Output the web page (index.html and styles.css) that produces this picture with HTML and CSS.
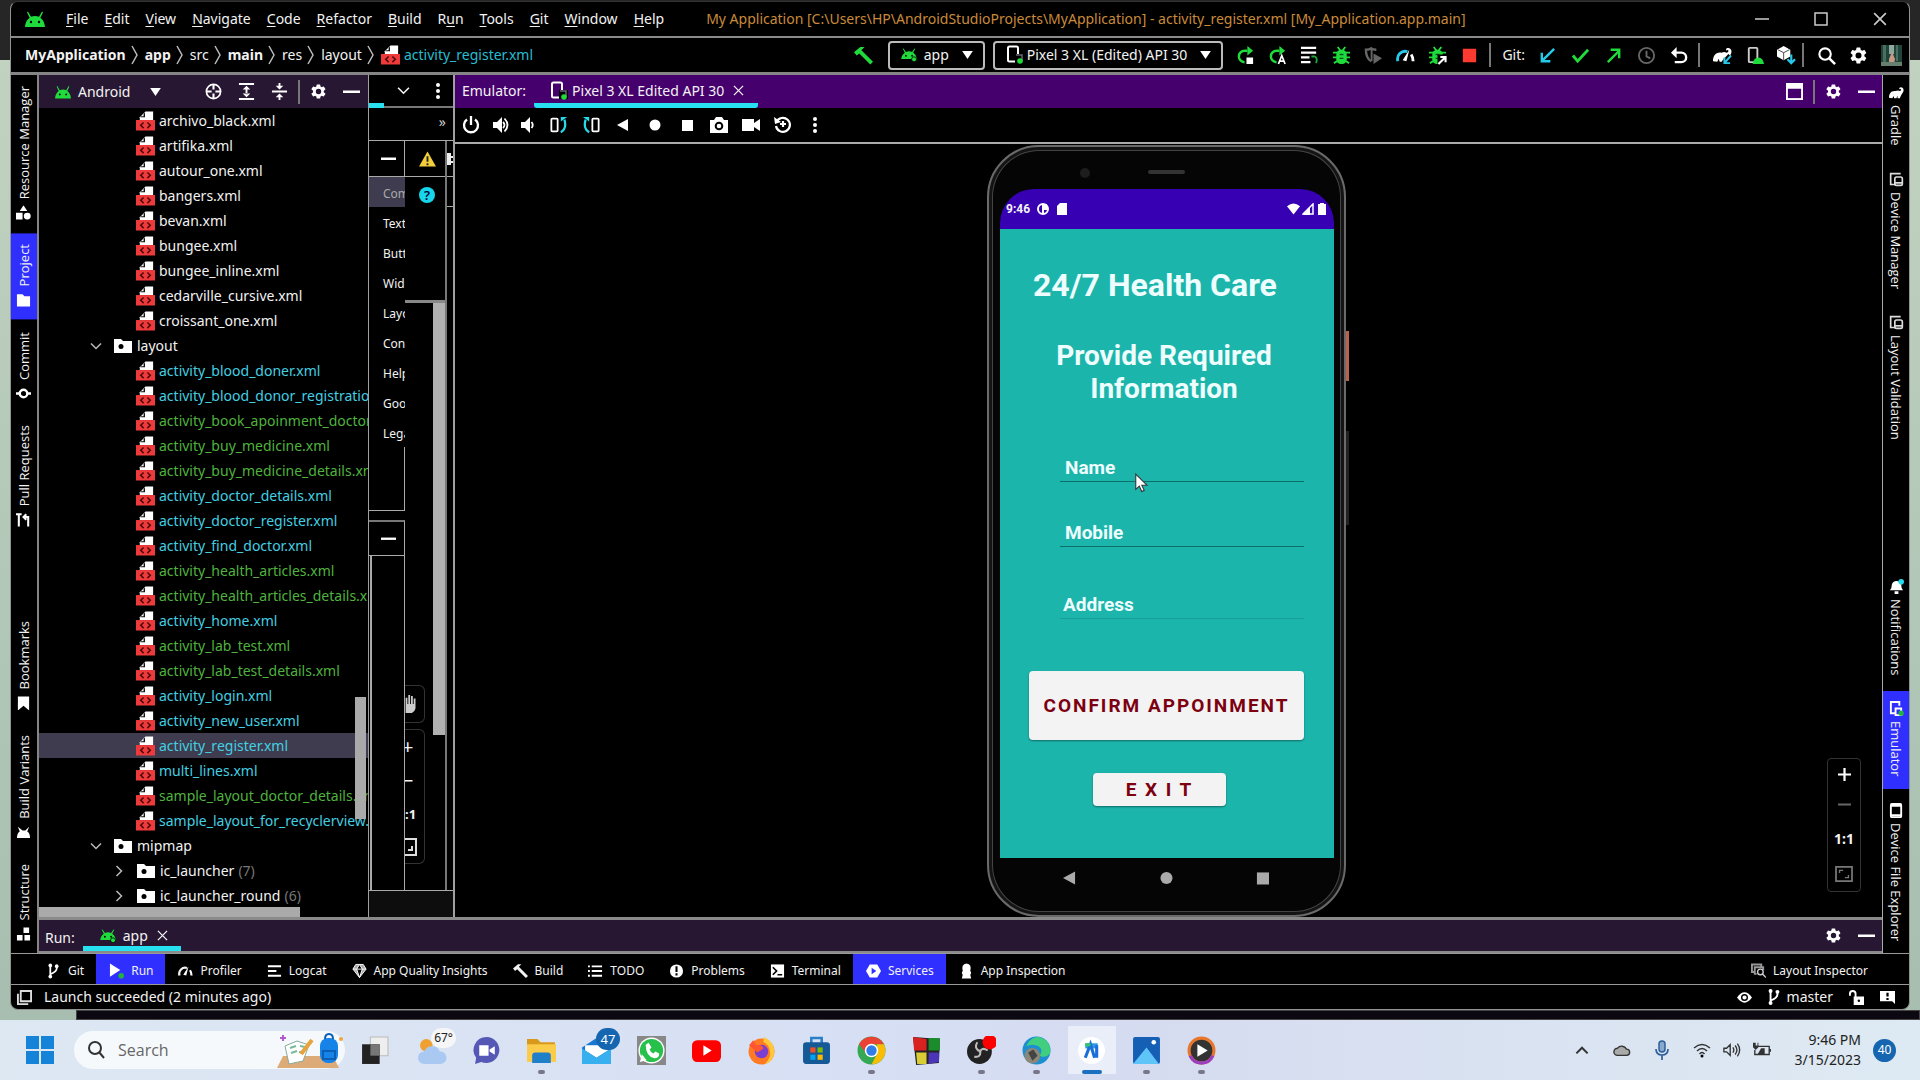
FILE: index.html
```html
<!DOCTYPE html>
<html lang="en">
<head>
<meta charset="utf-8">
<title>My Application - activity_register.xml</title>
<link rel="stylesheet" href="styles.css">
</head>
<body>
<svg class="defs" aria-hidden="true">
  <symbol id="android" viewBox="0 0 20 16"><path fill="#1fdc3c" d="M0 16C.4 11 2.600 8.400 4.600 6.800L2 1.200 3 .6l3 5.200a11 11 0 0 1 8 0L17 .6l1 .6-2.600 5.600C17.400 8.400 19.600 11 20 16z"/><circle cx="6" cy="11" r="1.200"/><circle cx="14" cy="11" r="1.200"/></symbol>
  <symbol id="androidrun" viewBox="0 0 20 18"><path fill="#1fdc3c" d="M0 14C.4 10 2.600 7.400 4.600 6L2 1 3 .5 6 5a11 11 0 0 1 8 0L17 .5l1 .5-2.600 5C17.400 7.400 19.600 10 20 14z"/><circle cx="6" cy="10" r="1.200"/><circle cx="14" cy="10" r="1.200"/><circle cx="16.500" cy="14.500" r="3.200" fill="#1fdc3c" stroke="#000"/></symbol>
  <symbol id="xml" viewBox="0 0 20 20"><path fill="#fff" d="M10 0h8v9H4V6z"/><path fill="#111" d="M9.500 1v5H4.500l1.200-1H8V2.500z"/><path fill="#ee3a3a" d="M0 9h20v11H0z"/><path fill="none" stroke="#4a0a0a" stroke-width="1.600" d="M8 11.500l-3 3 3 3M12 11.500l3 3-3 3"/></symbol>
  <symbol id="folder" viewBox="0 0 18 15"><path fill="#fff" d="M0 1h7l2 2h9v12H0z"/><circle cx="7" cy="8.500" r="2.500"/></symbol>
  <symbol id="down" viewBox="0 0 12 12"><path fill="none" stroke="currentColor" stroke-width="1.500" d="M1 3.500l5 5 5-5"/></symbol>
  <symbol id="right" viewBox="0 0 12 12"><path fill="none" stroke="currentColor" stroke-width="1.500" d="M3.500 1l5 5-5 5"/></symbol>
  <symbol id="tri" viewBox="0 0 12 9"><path fill="#fff" d="M0 0h12L6 9z"/></symbol>
  <symbol id="gear" viewBox="0 0 24 24"><path fill="#fff" fill-rule="evenodd" d="M19.400 13a7 7 0 0 0 0-2l2.200-1.700c.2-.2.300-.4.100-.7l-2-3.400c-.1-.3-.4-.3-.6-.2l-2.600 1a7 7 0 0 0-1.700-1L14.400 2.400a.5.500 0 0 0-.5-.4h-4a.5.500 0 0 0-.5.400L9 5a8 8 0 0 0-1.700 1L4.700 5c-.2-.1-.5 0-.6.200l-2 3.400c-.1.300-.1.500.1.700L4.400 11a7 7 0 0 0 0 2l-2.200 1.700c-.2.200-.3.400-.1.700l2 3.400c.1.300.4.300.6.200l2.600-1c.5.400 1.100.7 1.700 1l.4 2.600c0 .2.200.4.500.4h4c.3 0 .5-.2.500-.4l.4-2.600a7 7 0 0 0 1.700-1l2.600 1c.2.100.5 0 .6-.2l2-3.400c.1-.3.100-.5-.1-.7zM12 15.800a3.800 3.800 0 1 1 0-7.600 3.800 3.800 0 0 1 0 7.600z"/></symbol>
  <symbol id="dash" viewBox="0 0 16 16"><path fill="#fff" d="M0 7h16v2.500H0z"/></symbol>
  <symbol id="close" viewBox="0 0 12 12"><path stroke="currentColor" stroke-width="1.400" d="M1 1l10 10M11 1L1 11"/></symbol>
  <symbol id="dots" viewBox="0 0 6 18"><g fill="#fff"><circle cx="3" cy="3" r="2"/><circle cx="3" cy="9" r="2"/><circle cx="3" cy="15" r="2"/></g></symbol>
  <symbol id="target" viewBox="0 0 18 18"><circle cx="9" cy="9" r="7.500" fill="none" stroke="#fff" stroke-width="1.800"/><path stroke="#fff" stroke-width="2.200" d="M9 1v6M9 11v6M1 9h6M11 9h6"/></symbol>
  <symbol id="expand" viewBox="0 0 18 18"><path stroke="#fff" stroke-width="2" d="M1 1h16M1 17h16"/><path fill="#fff" d="M9 3l4 4H5zM9 15l4-4H5zM8 6h2v6H8z"/></symbol>
  <symbol id="collapse" viewBox="0 0 18 18"><path stroke="#fff" stroke-width="2" d="M1 9h16"/><path fill="#fff" d="M9 7L5 3h3V0h2v3h3zM9 11l-4 4h3v3h2v-3h3z"/></symbol>
  <symbol id="hammer" viewBox="0 0 18 18"><path fill="currentColor" d="M0 6l6-5 4 0-3 3 11 11-2.500 2.500L5 7 2.500 9z"/></symbol>
  <symbol id="device" viewBox="0 0 18 20"><rect x="2" y="1.500" width="10" height="15" rx="1.500" fill="none" stroke="#fff" stroke-width="2"/><path d="M9 9h9v9H9z"/><path fill="none" stroke="#667" stroke-width="1.500" d="M10 10h6v6"/><circle cx="14" cy="16" r="2.800" fill="#1fdc3c"/></symbol>
  <symbol id="rerun" viewBox="0 0 20 20"><path fill="none" stroke="#1fdc3c" stroke-width="2.600" d="M12 5H9a6 6 0 0 0 0 12"/><path fill="#1fdc3c" d="M12 0l6 5-6 5z"/></symbol>
  <symbol id="bug" viewBox="0 0 20 20"><path fill="none" stroke="#1fdc3c" stroke-width="2" d="M6 1l3 4M14 1l-3 4M1 7h18M1 12h18M2 18l5-3M18 18l-5-3"/><rect x="4.500" y="4" width="11" height="15" rx="5" fill="#1fdc3c"/><path stroke="#052" stroke-width="1.500" d="M8 9h4M8 13h4"/></symbol>
  <symbol id="gauge" viewBox="0 0 20 16"><path fill="none" stroke="currentColor" stroke-width="3" d="M2 14a8 8 0 0 1 10-10"/><path fill="none" stroke="#fff" stroke-width="3" d="M16 7q2 3 2 7"/><path fill="#fff" d="M14 2l-3 12-4-1z"/></symbol>
  <symbol id="elephant" viewBox="0 0 20 16"><path fill="#fff" d="M0 15c0-6 3-10 9-9 2-1 4-1 5 0 2 0 3-2 1.500-3l-1 1-1-1.500C15 0 19.500 1 19.500 5c0 3-3 5-4 8l-1 2.500h-3L11 12l-1 3.500H7L6 12.500l-1.500 3z"/></symbol>
  <symbol id="branch" viewBox="0 0 14 20"><path fill="none" stroke="#fff" stroke-width="2.200" d="M3 3v14M11 4v3q0 4-8 7"/><circle cx="3" cy="3" r="2.300" fill="#fff"/><circle cx="3" cy="17" r="2.300" fill="#fff"/><circle cx="11" cy="4" r="2.300" fill="#fff"/></symbol>
  <symbol id="screens" viewBox="0 0 18 18"><path fill="none" stroke="#ddd" stroke-width="2" d="M8 15H2V2h12"/><rect x="7" y="6" width="9" height="10" rx="2" fill="none" stroke="#ddd" stroke-width="2"/><path stroke="#ddd" stroke-width="2" d="M7 13h9"/></symbol>
  <symbol id="speaker" viewBox="0 0 18 18"><path fill="#fff" d="M1 6h4l5-5v16l-5-5H1z"/></symbol>
  <symbol id="rot" viewBox="0 0 20 20"><rect x="1.500" y="3" width="7" height="14" rx="1" fill="none" stroke="#fff" stroke-width="2"/><path fill="none" stroke="#27d9ea" stroke-width="2.500" d="M12 18q7-4 4-14"/><path fill="#27d9ea" d="M12 6V1h7z"/></symbol>
  <symbol id="fit" viewBox="0 0 20 18"><rect x="1" y="1" width="18" height="16" fill="none" stroke="currentColor" stroke-width="2"/><path fill="none" stroke="currentColor" stroke-width="1.500" d="M5 8V5h4M15 10v3h-4"/></symbol>
</svg>

<div class="app">
  <header class="titlebar">
    <svg class="logo"><use href="#android"/></svg>
    <nav class="menu">
      <a href="#"><u>F</u>ile</a><a href="#"><u>E</u>dit</a><a href="#"><u>V</u>iew</a><a href="#"><u>N</u>avigate</a><a href="#"><u>C</u>ode</a><a href="#"><u>R</u>efactor</a><a href="#"><u>B</u>uild</a><a href="#">R<u>u</u>n</a><a href="#"><u>T</u>ools</a><a href="#"><u>G</u>it</a><a href="#"><u>W</u>indow</a><a href="#"><u>H</u>elp</a>
    </nav>
    <h1>My Application [C:\Users\HP\AndroidStudioProjects\MyApplication] - activity_register.xml [My_Application.app.main]</h1>
    <div class="winbtns">
      <button aria-label="Minimize"><svg viewBox="0 0 14 14"><path stroke="#999" stroke-width="2" d="M0 7h14"/></svg></button>
      <button aria-label="Maximize"><svg viewBox="0 0 14 14"><rect x="1" y="1" width="12" height="12" fill="none" stroke="#ccc" stroke-width="1.500"/></svg></button>
      <button aria-label="Close"><svg><use href="#close"/></svg></button>
    </div>
  </header>

  <div class="navbar">
    <nav class="crumbs">
      <b>MyApplication</b><svg class="sep" viewBox="0 0 8 20"><path fill="none" stroke="#bbb" stroke-width="1.500" d="M1 1l5 9-5 9"/></svg><b>app</b><svg class="sep" viewBox="0 0 8 20"><path fill="none" stroke="#bbb" stroke-width="1.500" d="M1 1l5 9-5 9"/></svg><span>src</span><svg class="sep" viewBox="0 0 8 20"><path fill="none" stroke="#bbb" stroke-width="1.500" d="M1 1l5 9-5 9"/></svg><b>main</b><svg class="sep" viewBox="0 0 8 20"><path fill="none" stroke="#bbb" stroke-width="1.500" d="M1 1l5 9-5 9"/></svg><span>res</span><svg class="sep" viewBox="0 0 8 20"><path fill="none" stroke="#bbb" stroke-width="1.500" d="M1 1l5 9-5 9"/></svg><span>layout</span><svg class="sep" viewBox="0 0 8 20"><path fill="none" stroke="#bbb" stroke-width="1.500" d="M1 1l5 9-5 9"/></svg><svg class="xml"><use href="#xml"/></svg><a href="#">activity_register.xml</a>
    </nav>
    <div class="tools">
      <button class="ic green" aria-label="Build"><svg><use href="#hammer"/></svg></button>
      <button class="combo"><svg class="and"><use href="#androidrun"/></svg>app<svg class="arr"><use href="#tri"/></svg></button>
      <button class="combo"><svg class="dev"><use href="#device"/></svg>Pixel 3 XL (Edited) API 30<svg class="arr"><use href="#tri"/></svg></button>
      <div class="run">
        <button class="ic" aria-label="Rerun"><svg viewBox="0 0 20 20"><use href="#rerun"/><path fill="#fff" d="M11 12h7v7h-7z"/></svg></button>
        <button class="ic" aria-label="Apply changes"><svg viewBox="0 0 20 20"><use href="#rerun"/><path fill="none" stroke="#fff" stroke-width="1.800" d="M11 19l3.500-9 3.500 9M12 16h5"/></svg></button>
        <button class="ic" aria-label="Apply code"><svg viewBox="0 0 20 20"><path stroke="#fff" stroke-width="2.400" d="M1 2h16M1 7h16M1 12h9M1 17h10"/><path fill="none" stroke="#1fa53c" stroke-width="2" d="M12 11h3q4 1 2 7"/></svg></button>
        <button class="ic" aria-label="Debug"><svg><use href="#bug"/></svg></button>
        <button class="ic" aria-label="Coverage"><svg viewBox="0 0 20 20"><path fill="none" stroke="#666" stroke-width="2.500" d="M13 4Q9 4 7.500 2.500 6 4 2 4q0 9 5.500 12"/><path fill="#666" d="M7 2h2v14H7zM10 8l9 5-9 6z"/></svg></button>
        <button class="ic cyan" aria-label="Profile"><svg><use href="#gauge"/></svg></button>
        <button class="ic" aria-label="Attach debugger"><svg viewBox="0 0 20 20"><use href="#bug"/><path d="M10 9h10v11H10z"/><path fill="none" stroke="#fff" stroke-width="2.200" d="M11 19l7-7M13 11.500h5.500V17"/></svg></button>
        <button class="ic" aria-label="Stop"><svg viewBox="0 0 20 20"><path fill="#ff3a30" d="M3 3h14v14H3z"/></svg></button>
      </div>
      <hr>
      <span class="git">Git:</span>
      <div class="vcs">
        <button class="ic" aria-label="Update"><svg viewBox="0 0 20 20"><path fill="none" stroke="#27c9ea" stroke-width="2.500" d="M17 3L4 16M4 7v9h9"/></svg></button>
        <button class="ic" aria-label="Commit"><svg viewBox="0 0 20 20"><path fill="none" stroke="#1fdc3c" stroke-width="3" d="M2 10l5 6L18 4"/></svg></button>
        <button class="ic" aria-label="Push"><svg viewBox="0 0 20 20"><path fill="none" stroke="#1fdc3c" stroke-width="2.500" d="M4 17L16 5M7 4h9v9"/></svg></button>
        <button class="ic" aria-label="History"><svg viewBox="0 0 20 20"><circle cx="10" cy="10" r="8" fill="none" stroke="#666" stroke-width="2"/><path fill="none" stroke="#666" stroke-width="2" d="M10 5v6l4 2"/></svg></button>
        <button class="ic" aria-label="Rollback"><svg viewBox="0 0 20 20"><path fill="none" stroke="#fff" stroke-width="2.500" d="M3 7h9a5 5 0 0 1 0 10H5"/><path fill="#fff" d="M1 7l6-6v12z"/></svg></button>
      </div>
      <hr>
      <button class="ic" aria-label="Sync Gradle"><svg viewBox="0 0 20 20"><use href="#elephant" width="20" height="16" y="1"/><path stroke="#000" stroke-width="5" d="M18 10l-7 8"/><path fill="none" stroke="#27c9ea" stroke-width="2" d="M19 10l-7 8M12 12v6h6"/></svg></button>
      <button class="ic" aria-label="Device manager"><svg viewBox="0 0 20 20"><rect x="4" y="2" width="9" height="15" rx="1" fill="none" stroke="#ccc" stroke-width="2"/><path fill="#1fdc3c" d="M8 19q1-7 6-7t6 7z"/></svg></button>
      <button class="ic" aria-label="SDK manager"><svg viewBox="0 0 20 20"><path fill="#fff" d="M0 4l7-4 7 4v7l-7 4-7-4z"/><path fill="none" stroke="#444" d="M1 4l6 3 6-3M7 7v8"/><path fill="none" stroke="#27c9ea" stroke-width="2.300" d="M15 9v9M11 14l4 4 4-4"/></svg></button>
      <hr>
      <button class="ic" aria-label="Search"><svg viewBox="0 0 20 20"><circle cx="8.500" cy="8.500" r="6" fill="none" stroke="#fff" stroke-width="2.200"/><path stroke="#fff" stroke-width="2.600" d="M13 13l6 6"/></svg></button>
      <button class="ic" aria-label="Settings"><svg><use href="#gear"/></svg></button>
      <svg class="avatar" viewBox="0 0 21 21"><path fill="#22423c" d="M0 0h21v21H0z"/><path fill="#48705f" d="M2 0h3v21H2zM15 0h2v16h-2z"/><path fill="#8fa79c" d="M8 0h5v9H8z"/><path fill="#c79a86" d="M8 14l3-7 3 7-1 5H8z"/><path fill="#66806f" d="M0 17h21v4H0z"/></svg>
    </div>
  </div>

  <main>
    <aside class="stripe left">
      <button><svg viewBox="0 0 16 16"><path fill="#fff" d="M8 0l4 6H4zM0 8h7v7H0z"/><circle cx="12" cy="11.500" r="3.700" fill="#fff"/></svg>Resource Manager</button>
      <button class="on"><svg viewBox="0 0 16 16"><path fill="#fff" d="M1 2h6l2 2h6v11H1z"/></svg>Project</button>
      <button><svg viewBox="0 0 16 16"><circle cx="8" cy="8" r="4" fill="none" stroke="#fff" stroke-width="2.500"/><path stroke="#fff" stroke-width="2.500" d="M0 8h4M12 8h4"/></svg>Commit</button>
      <button><svg viewBox="0 0 16 16"><path fill="none" stroke="#fff" stroke-width="2.200" d="M3 15V2M0 2h6M8 5h5v10M11 2L8 5l3 3"/></svg>Pull Requests</button>
      <button class="push"><svg viewBox="0 0 16 16"><path fill="#fff" d="M2 1h12v15l-6-5-6 5z"/></svg>Bookmarks</button>
      <button><svg viewBox="0 0 16 16"><path fill="#fff" d="M1 14q0-5 3-7L2 2l5 4h3l4-4-2 5q3 2 3 7z"/></svg>Build Variants</button>
      <button><svg viewBox="0 0 16 16"><path fill="#fff" d="M8 1h6v6H8zM1 9h6v6H1zM9 9h6v6H9z"/></svg>Structure</button>
    </aside>

    <div class="center">
      <div class="panes">
        <section class="project">
          <header>
            <svg class="and"><use href="#android"/></svg><span>Android</span><svg class="arr"><use href="#tri"/></svg>
            <div class="acts">
              <svg><use href="#target"/></svg><svg><use href="#expand"/></svg><svg><use href="#collapse"/></svg><hr><svg><use href="#gear"/></svg><svg><use href="#dash"/></svg>
            </div>
          </header>
          <ul class="tree">
            <li><svg><use href="#xml"/></svg>archivo_black.xml</li>
            <li><svg><use href="#xml"/></svg>artifika.xml</li>
            <li><svg><use href="#xml"/></svg>autour_one.xml</li>
            <li><svg><use href="#xml"/></svg>bangers.xml</li>
            <li><svg><use href="#xml"/></svg>bevan.xml</li>
            <li><svg><use href="#xml"/></svg>bungee.xml</li>
            <li><svg><use href="#xml"/></svg>bungee_inline.xml</li>
            <li><svg><use href="#xml"/></svg>cedarville_cursive.xml</li>
            <li><svg><use href="#xml"/></svg>croissant_one.xml</li>
            <li class="dir"><svg class="chev"><use href="#down"/></svg><svg class="fold"><use href="#folder"/></svg>layout</li>
            <li class="c"><svg><use href="#xml"/></svg>activity_blood_doner.xml</li>
            <li class="c"><svg><use href="#xml"/></svg>activity_blood_donor_registration.xml</li>
            <li class="g"><svg><use href="#xml"/></svg>activity_book_apoinment_doctor.xml</li>
            <li class="g"><svg><use href="#xml"/></svg>activity_buy_medicine.xml</li>
            <li class="g"><svg><use href="#xml"/></svg>activity_buy_medicine_details.xml</li>
            <li class="c"><svg><use href="#xml"/></svg>activity_doctor_details.xml</li>
            <li class="c"><svg><use href="#xml"/></svg>activity_doctor_register.xml</li>
            <li class="c"><svg><use href="#xml"/></svg>activity_find_doctor.xml</li>
            <li class="g"><svg><use href="#xml"/></svg>activity_health_articles.xml</li>
            <li class="g"><svg><use href="#xml"/></svg>activity_health_articles_details.xml</li>
            <li class="c"><svg><use href="#xml"/></svg>activity_home.xml</li>
            <li class="g"><svg><use href="#xml"/></svg>activity_lab_test.xml</li>
            <li class="g"><svg><use href="#xml"/></svg>activity_lab_test_details.xml</li>
            <li class="c"><svg><use href="#xml"/></svg>activity_login.xml</li>
            <li class="c"><svg><use href="#xml"/></svg>activity_new_user.xml</li>
            <li class="c sel"><svg><use href="#xml"/></svg>activity_register.xml</li>
            <li class="c"><svg><use href="#xml"/></svg>multi_lines.xml</li>
            <li class="g"><svg><use href="#xml"/></svg>sample_layout_doctor_details.xml</li>
            <li class="c"><svg><use href="#xml"/></svg>sample_layout_for_recyclerview.xml</li>
            <li class="dir"><svg class="chev"><use href="#down"/></svg><svg class="fold"><use href="#folder"/></svg>mipmap</li>
            <li class="sub"><svg class="chev"><use href="#right"/></svg><svg class="fold"><use href="#folder"/></svg>ic_launcher <em>(7)</em></li>
            <li class="sub"><svg class="chev"><use href="#right"/></svg><svg class="fold"><use href="#folder"/></svg>ic_launcher_round <em>(6)</em></li>
          </ul>
          <span class="vbar"></span><span class="hbar"></span>
        </section>

        <section class="editor">
          <div class="etabs"><span class="cur"></span><svg class="chev"><use href="#down"/></svg><svg class="dts"><use href="#dots"/></svg></div>
          <div class="emore">»</div>
          <div class="ecols">
            <div class="palette">
              <div class="phead"><svg><use href="#dash"/></svg></div>
              <ul><li class="sel">Common</li><li>Text</li><li>Buttons</li><li>Widgets</li><li>Layouts</li><li>Containers</li><li>Helpers</li><li>Google</li><li>Legacy</li></ul>
              <div class="gap"></div>
              <div class="phead comp"><svg><use href="#dash"/></svg></div>
              <div class="ctree"></div>
            </div>
            <div class="surface">
              <div class="warn"><svg viewBox="0 0 18 16"><path fill="#f3cf3c" d="M9 0l9 16H0z"/><path stroke="#222" stroke-width="2" d="M9 5v6M9 12.500v2"/></svg></div>
              <div class="help"><span>?</span></div>
              <div class="canvas">
                <div class="zoomcut hand"><svg viewBox="0 0 12 20"><path fill="#ccc" d="M0 3h2v7h1V0h2v10h1V1h2v9h1V4h2v11q-1 4-4 5H0z"/></svg></div>
                <div class="zoomcut"><span>+</span><span>−</span><span class="one">:1</span><svg viewBox="0 0 12 18"><path fill="none" stroke="#ddd" stroke-width="2" d="M0 1h11v16H0M7 8v4H3"/></svg></div>
                <span class="sbar"></span>
              </div>
            </div>
            <div class="attrs"><div><svg viewBox="0 0 6 12"><path fill="#eee" d="M0 0h4v3h2v2H4v3h2v2H4v2H0z"/></svg></div><div></div></div>
          </div>
          <div class="efoot"></div>
        </section>

        <section class="emulator">
          <header>
            <span class="lbl">Emulator:</span>
            <div class="tab"><svg class="dev"><use href="#device"/></svg>Pixel 3 XL Edited API 30<svg class="x"><use href="#close"/></svg></div>
            <div class="acts"><svg viewBox="0 0 18 18"><rect x="1" y="1" width="16" height="16" fill="none" stroke="#fff" stroke-width="2"/><path fill="#fff" d="M1 1h16v5H1z"/></svg><hr><svg><use href="#gear"/></svg><svg><use href="#dash"/></svg></div>
          </header>
          <div class="etools">
            <button aria-label="Power"><svg viewBox="0 0 18 18"><path fill="none" stroke="#fff" stroke-width="2.300" d="M5 3.500a7 7 0 1 0 8 0M9 0v9"/></svg></button>
            <button class="n" aria-label="Volume up"><svg viewBox="0 0 18 18"><use href="#speaker"/><path fill="none" stroke="#fff" stroke-width="1.800" d="M11 6q3 3 0 6M12.500 2.500q6 6.500 0 13"/></svg></button>
            <button class="n" aria-label="Volume down"><svg viewBox="0 0 18 18"><use href="#speaker"/><path fill="none" stroke="#fff" stroke-width="1.800" d="M11.500 6q2.500 3 0 6"/></svg></button>
            <button aria-label="Rotate left"><svg><use href="#rot"/></svg></button>
            <button aria-label="Rotate right"><svg viewBox="0 0 20 20"><g transform="translate(20) scale(-1 1)"><use href="#rot"/></g></svg></button>
            <button aria-label="Back"><svg viewBox="0 0 18 18"><path fill="#fff" d="M3 9l11-6v12z"/></svg></button>
            <button aria-label="Home"><svg viewBox="0 0 18 18"><circle cx="9" cy="9" r="5.500" fill="#fff"/></svg></button>
            <button aria-label="Overview"><svg viewBox="0 0 18 18"><path fill="#fff" d="M4 4h11v11H4z"/></svg></button>
            <button aria-label="Screenshot"><svg viewBox="0 0 18 18"><path fill="#fff" d="M0 4h4l2-3h6l2 3h4v13H0z"/><circle cx="9" cy="10" r="3.300" fill="none" stroke="#000" stroke-width="2"/></svg></button>
            <button aria-label="Record"><svg viewBox="0 0 18 18"><path fill="#fff" d="M0 3h12v4l6-4v12l-6-4v4H0z"/></svg></button>
            <button aria-label="Snapshots"><svg viewBox="0 0 18 18"><path fill="none" stroke="#fff" stroke-width="2.200" d="M2.500 6A7 7 0 1 1 2 10M9 5v6M6 8h6"/><path fill="#fff" d="M0 1l1 7 6-2z"/></svg></button>
            <button aria-label="More"><svg><use href="#dots"/></svg></button>
          </div>
          <div class="stage">
            <div class="phone">
              <div class="bezel"><span class="cam"></span><span class="ear"></span></div>
              <div class="screen">
                <div class="sbr"><b>9:46</b>
                  <svg viewBox="0 0 12 12"><circle cx="6" cy="6" r="5" fill="none" stroke="#fff" stroke-width="2"/><path fill="#fff" d="M5 1h5v6H7v4H5z"/></svg>
                  <svg viewBox="0 0 12 12"><path fill="#fff" d="M4 0h7v12H1V3z"/></svg>
                  <svg class="wifi" viewBox="0 0 14 12"><path fill="#fff" d="M0 3q7-6 14 0L7 12z"/></svg>
                  <svg viewBox="0 0 12 12"><path fill="none" stroke="#fff" stroke-width="1.500" d="M11 1v10H1z"/><path fill="#fff" d="M8 4v8H1z"/></svg>
                  <svg viewBox="0 0 12 12"><path fill="#fff" d="M4 0h4v1h2v11H2V1h2z"/></svg>
                </div>
                <form class="health">
                  <h2>24/7 Health Care</h2>
                  <h3>Provide Required Information</h3>
                  <input class="f1" type="text" placeholder="Name" aria-label="Name">
                  <input class="f2" type="text" placeholder="Mobile" aria-label="Mobile">
                  <input class="f3" type="text" placeholder="Address" aria-label="Address">
                  <button type="button" class="confirm">CONFIRM APPOINMENT</button>
                  <button type="button" class="exit">E X I T</button>
                  <svg class="cursor" viewBox="0 0 12 18"><path fill="#fff" stroke="#333" d="M.7.800v14l3.300-3 2.200 5 2.300-1-2.200-4.800H11z"/></svg>
                </form>
                <div class="softnav">
                  <svg viewBox="0 0 14 14"><path fill="#aaa" d="M0 7l13-7v14z"/></svg><svg viewBox="0 0 14 14"><circle cx="7" cy="7" r="6.500" fill="#aaa"/></svg><svg viewBox="0 0 14 14"><path fill="#aaa" d="M1 1h13v13H1z"/></svg>
                </div>
              </div>
              <span class="power"></span><span class="volume"></span>
            </div>
            <div class="zoom"><button aria-label="Zoom in"><svg viewBox="0 0 14 14"><path stroke="#fff" stroke-width="2.400" d="M7 0v14M0 7h14"/></svg></button><button aria-label="Zoom out"><svg viewBox="0 0 14 14"><path stroke="#666" stroke-width="2" d="M0 7h14"/></svg></button><button>1:1</button><button class="fit" aria-label="Fit"><svg><use href="#fit"/></svg></button></div>
          </div>
        </section>
      </div>

      <section class="runbar">
        <span>Run:</span>
        <div class="tab"><svg class="and"><use href="#androidrun"/></svg>app<svg class="x"><use href="#close"/></svg></div>
        <div class="acts"><svg><use href="#gear"/></svg><svg><use href="#dash"/></svg></div>
      </section>
    </div>

    <aside class="stripe rgt">
      <button><svg><use href="#elephant"/></svg>Gradle</button>
      <button><svg><use href="#screens"/></svg>Device Manager</button>
      <button><svg><use href="#screens"/></svg>Layout Validation</button>
      <button class="push"><svg viewBox="0 0 16 16"><path fill="#fff" d="M1 12q2-2 2-6 1-4 5-4t5 4q0 4 2 6zM6 13h4v3H6z"/><circle cx="13" cy="3" r="3" fill="#27d9ea"/></svg>Notifications</button>
      <button class="on"><svg viewBox="0 0 16 16"><path fill="none" stroke="#fff" stroke-width="2" d="M6 13H2V1h9v4M7 8h6v7H7z"/><circle cx="13" cy="13" r="2.800" fill="#1fb53c"/></svg>Emulator</button>
      <button><svg viewBox="0 0 16 16"><rect x="2" y="1" width="11" height="14" rx="1" fill="none" stroke="#fff" stroke-width="2"/><path stroke="#fff" stroke-width="2" d="M2 3h11M2 13h11"/></svg>Device File Explorer</button>
    </aside>
  </main>

  <footer class="toolwins">
    <button><svg><use href="#branch"/></svg>Git</button>
    <button class="on"><svg viewBox="0 0 16 16"><path fill="#fff" d="M1 0l11 7-11 7z"/><circle cx="13" cy="13" r="3" fill="#1fb53c"/></svg>Run</button>
    <button><svg><use href="#gauge"/></svg>Profiler</button>
    <button><svg viewBox="0 0 16 16"><path stroke="#fff" stroke-width="2.200" d="M1 3h14M1 8h9M1 13h14"/></svg>Logcat</button>
    <button><svg viewBox="0 0 16 16"><path fill="#aaa" stroke="#fff" d="M4 1h8l3 5-7 9-7-9zM1 6h14M5 6l3 9 3-9-3-5z"/></svg>App Quality Insights</button>
    <button><svg><use href="#hammer"/></svg>Build</button>
    <button><svg viewBox="0 0 16 16"><path stroke="#fff" stroke-width="2" stroke-dasharray="2 2 11" d="M0 3h15M0 8h15M0 13h15"/></svg>TODO</button>
    <button><svg viewBox="0 0 16 16"><circle cx="8" cy="8" r="7" fill="#fff"/><path stroke="#000" stroke-width="2.200" d="M8 3v6M8 10.500v2.200"/></svg>Problems</button>
    <button><svg viewBox="0 0 16 16"><path fill="#fff" d="M1 1h14v14H1z"/><path fill="none" stroke="#000" stroke-width="1.800" d="M3 4l4 4-4 4M8 12h5"/></svg>Terminal</button>
    <button class="on"><svg viewBox="0 0 16 16"><path fill="#fff" d="M4 1h8l4 7-4 7H4L0 8z"/><path fill="#3030ff" d="M6 4.500l5 3.500-5 3.500z"/></svg>Services</button>
    <button><svg viewBox="0 0 16 16"><path fill="#fff" d="M4 8q-2-7 4-8 6 1 4 8 2 2 0 4l1 4H3l1-4q-2-2 0-4z"/></svg>App Inspection</button>
    <button class="end"><svg viewBox="0 0 16 16"><path fill="none" stroke="#999" stroke-width="2" d="M3 9H1V1h10v2M6 11H4V4h9v3"/><circle cx="10" cy="9" r="3" fill="none" stroke="#ccc" stroke-width="1.500"/><path stroke="#ccc" stroke-width="1.500" d="M12 11l4 4"/></svg>Layout Inspector</button>
  </footer>
  <footer class="status">
    <svg viewBox="0 0 16 16"><path fill="none" stroke="#ddd" stroke-width="2" d="M4 1h11v11H4zM1 4v11h11"/></svg>
    <span class="msg">Launch succeeded (2 minutes ago)</span>
    <svg viewBox="0 0 16 16"><path fill="#fff" d="M0 8q8-11 16 0-8 11-16 0z"/><circle cx="8" cy="8" r="3" fill="none" stroke="#000" stroke-width="1.500"/></svg>
    <span class="br"><svg><use href="#branch"/></svg>master</span>
    <svg viewBox="0 0 16 16"><path fill="none" stroke="#fff" stroke-width="2" d="M1 6V4q0-3 3-3t3 3v4"/><path fill="#fff" d="M5 7h11v9H5z"/><circle cx="10.500" cy="11.500" r="1.300"/></svg>
    <svg viewBox="0 0 16 16"><path fill="#fff" d="M0 1h16v14l-3-3H0z"/><path stroke="#000" stroke-width="2.400" d="M8 3v4M8 8.500v2.200"/></svg>
  </footer>
</div>
<div class="behind"></div>

<footer class="taskbar">
  <button class="start" aria-label="Start"><svg viewBox="0 0 28 28"><path fill="#1583d8" d="M0 0h13v13H0zM15 0h13v13H15zM0 15h13v13H0zM15 15h13v13H15z"/></svg></button>
  <label class="search"><svg viewBox="0 0 18 18"><circle cx="8" cy="7" r="6" fill="none" stroke="#333" stroke-width="2"/><path stroke="#333" stroke-width="2" d="M12 11l5 6"/></svg><input type="text" placeholder="Search">
    <svg class="art" viewBox="0 0 66 36"><path fill="#dcab78" d="M6 24h50l6 12H0z"/><path fill="#fff" stroke="#8a9" d="M8 14l12-5 12 4-6 16-14 3z"/><path stroke="#7b9" stroke-width="2" d="M13 16l6-2M14 21l6-2M23 14l5 1M22 20l5 1"/><path stroke="#e8a33c" stroke-width="4" d="M35 8L24 22"/><path stroke="#b25bd0" stroke-width="2" d="M6 3v6M3 6h6"/><rect x="43" y="6" width="18" height="25" rx="8" fill="#1583e8"/><path fill="none" stroke="#0a5fb5" stroke-width="2" d="M48 7q0-5 4-5t4 5M46 19h12v8H46z"/><circle cx="64" cy="7" r="2" fill="#f3a53c"/></svg>
  </label>
  <div class="apps">
    <button aria-label="Task view"><svg viewBox="0 0 28 28"><path fill="#eee" stroke="#bbb" d="M10 1h17v18H10z"/><path fill="#222" d="M2 8h17v19H2z"/><path fill="#777" d="M10 8h9v11h-9z"/></svg></button>
    <button class="wide" aria-label="Weather"><svg viewBox="0 0 28 28"><circle cx="8" cy="9" r="6" fill="#f0a030"/><path fill="#a9c8f2" d="M6 27a6 6 0 0 1 0-12 8 8 0 0 1 15 0 6 6 0 0 1 1 12z"/></svg><span class="temp">67°</span></button>
    <button aria-label="Chat"><svg viewBox="0 0 28 28"><path fill="#5558b5" d="M14 1a12.500 12.500 0 1 1-5 24l-6 2 1-6A12.500 12.500 0 0 1 14 1z"/><path fill="#fff" d="M7 9h9v10H7zM17 13l5-3v8l-5-3z"/></svg></button>
    <button class="dot" aria-label="Explorer"><svg viewBox="0 0 28 28"><path fill="#d99a1c" d="M0 3h10l3 3h14v6H0z"/><path fill="#fbcb4a" d="M0 8h28v17H0z"/><path fill="#1f7fc8" d="M5 19q0-3 3-3h12q3 0 3 3v7H5z"/></svg></button>
    <button aria-label="Mail"><svg viewBox="0 0 28 28"><path fill="#1a78d0" d="M0 11L14 2l14 9v15H0z"/><path fill="#fff" d="M3 9h22v5l-11 7-11-7z"/><path fill="#38b0f0" d="M0 12l14 9 14-9v15H0z"/></svg><span class="count">47</span></button>
    <button aria-label="WhatsApp"><svg viewBox="0 0 30 30"><path fill="#888" d="M0 0h30v30H0z"/><circle cx="15" cy="15" r="13.500" fill="#fff"/><circle cx="15" cy="15" r="12" fill="#27c04a"/><path fill="#fff" d="M3 27l2-8 5 6z"/><path fill="#fff" d="M9 9l3-2 3 5-2 2q1 3 4 4l2-2 4 2q0 5-5 5Q9 21 9 9z"/></svg></button>
    <button aria-label="YouTube"><svg viewBox="0 0 28 28"><rect y="4" width="28" height="21" rx="5" fill="#f00"/><path fill="#fff" d="M11 9l8 5-8 5z"/></svg></button>
    <button aria-label="Firefox"><svg viewBox="0 0 28 28"><circle cx="14" cy="15" r="12.500" fill="#ff7a22"/><path fill="#ffc83a" d="M16 1q12 5 10 17-2 8-9 9 7-6 5-13-1-6-6-8z"/><circle cx="14" cy="15" r="6.500" fill="#7a3fd0"/><path fill="#ff5533" d="M2 9l4-5 3 5q5-1 7 3l-6 4z"/></svg></button>
    <button aria-label="Store"><svg viewBox="0 0 28 28"><path fill="none" stroke="#2a7fc8" stroke-width="2.500" d="M9 7V2h10v5"/><rect x="1" y="6" width="26" height="21" rx="3" fill="#155a96"/><path fill="#f25022" d="M8 11h5v5H8z"/><path fill="#7fba00" d="M15 11h5v5h-5z"/><path fill="#00a4ef" d="M8 18h5v5H8z"/><path fill="#ffb900" d="M15 18h5v5h-5z"/></svg></button>
    <button class="dot" aria-label="Chrome"><svg viewBox="0 0 28 28"><circle cx="14" cy="14" r="13.500" fill="#34a853"/><path fill="#ea4335" d="M2 8a13.500 13.500 0 0 1 24 0H14l-5 9z"/><path fill="#fbbc04" d="M26 8a13.500 13.500 0 0 1-12 19.500L20 16l-1-8z"/><circle cx="14" cy="14" r="6.500" fill="#fff"/><circle cx="14" cy="14" r="5" fill="#2f7de8"/></svg></button>
    <button aria-label="Blocks"><svg viewBox="0 0 28 28"><path fill="#222" d="M1 1l26 2-1 23-22 2z"/><path fill="#d8221f" d="M1 1l13 2v11H2z"/><path fill="#1c8b2c" d="M16 2h11v12H16z"/><path fill="#d9cc35" d="M4 16h10v11H5z"/><path fill="#4b35b8" d="M16 16h10v9l-10 2z"/></svg></button>
    <button class="dot" aria-label="OBS"><svg viewBox="0 0 28 28"><circle cx="12" cy="15" r="12" fill="#222"/><path fill="none" stroke="#bbb" stroke-width="2" d="M10 6q-4 6 3 9M20 14q-6-4-8 2M7 20q6 1 6-5"/><circle cx="22" cy="6" r="7" fill="#f00"/></svg></button>
    <button class="dot" aria-label="Edge"><svg viewBox="0 0 28 28"><circle cx="14" cy="14" r="13.500" fill="#1d8fd0"/><path fill="#3fcf7f" d="M16 1a13 13 0 0 1 11 16q-4 5-10 2 4-5-1-9-6-3-12 0Q8 1 16 1z"/><circle cx="10" cy="19" r="7.500" fill="#8d8778"/><path fill="#444" d="M6 16l5-3 4 6-5 5z"/></svg></button>
    <button class="dot act" aria-label="Android Studio"><svg viewBox="0 0 28 28"><circle cx="14" cy="14" r="13" fill="#fff"/><path fill="#2f9be8" d="M8 7h12v5H8z"/><path fill="none" stroke="#1b6fd8" stroke-width="3" d="M8 21l5-13 4 13M19 9v12"/><path fill="#35c46a" d="M8 7h5v3H8z"/></svg></button>
    <button class="dot" aria-label="Photos"><svg viewBox="0 0 28 28"><rect x="1" y="1" width="26" height="26" rx="2" fill="#155fb5"/><path fill="#5fc4f7" d="M1 27L14 11l12 16z"/><circle cx="21" cy="6" r="2.200" fill="#fff"/></svg></button>
    <button class="dot" aria-label="Media Player"><svg viewBox="0 0 28 28"><circle cx="14" cy="14" r="12" fill="#333" stroke="#e8762c" stroke-width="3"/><path fill="none" stroke="#9b3fc0" stroke-width="3" d="M3 19a12 12 0 0 0 22 0"/><path fill="#fff" d="M10 8l10 6-10 6z"/></svg></button>
  </div>
  <div class="tray">
    <svg viewBox="0 0 16 16"><path fill="none" stroke="#333" stroke-width="1.800" d="M3 11l5-5 5 5"/></svg>
    <svg viewBox="0 0 20 16"><path fill="#aaa" stroke="#333" stroke-width="1.500" d="M5 14a4 4 0 0 1 0-8 6 6 0 0 1 10 1 3.500 3.500 0 0 1 0 7z"/></svg>
    <svg viewBox="0 0 16 20"><rect x="5" y="1" width="6" height="11" rx="3" fill="#8ac" stroke="#2f5f9a" stroke-width="1.500"/><path fill="none" stroke="#2f5f9a" stroke-width="1.700" d="M2 9q0 6 6 6t6-6M8 15v5"/></svg>
    <div><svg viewBox="0 0 18 16"><path fill="none" stroke="#333" stroke-width="1.500" d="M1 6q8-7 16 0M4 9q5-5 10 0M6.500 12q2.500-3 5 0"/><circle cx="9" cy="14" r="1.500"/></svg>
    <svg viewBox="0 0 20 16"><path fill="none" stroke="#333" stroke-width="1.500" d="M1 6h3l4-4v12l-4-4H1zM11 5q2 3 0 6M13.500 3q4 5 0 10M16 1q5 7 0 14"/></svg>
    <svg viewBox="0 0 20 16"><path fill="none" stroke="#333" stroke-width="1.500" d="M5 4h13v9H2V8"/><path fill="#333" d="M5 13l4-7h4v7zM18 7h2v3h-2zM1 0h2v3h2V0h1v5L3 8 0 5V0z"/></svg></div>
    <time><span>9:46 PM</span><span>3/15/2023</span></time>
    <span class="badge">40</span>
  </div>
</footer>
</body>
</html>
```
FILE: styles.css
```css
* { box-sizing: border-box; }
body {
  margin: 0;
  min-height: 100vh;
  display: flex;
  flex-direction: column;
  overflow: hidden;
  background: linear-gradient(#262626 60px, #c2d2c0 60px, #b0c6b6 60%, #a6bcae);
  font: 14px/20px "Noto Sans", "Open Sans", sans-serif;
  color: #f2f2f2;
}
svg { display: block; flex: none; }
button { background: none; border: 0; padding: 0; color: inherit; font: inherit; display: flex; align-items: center; }
a { color: inherit; text-decoration: none; }
ul { list-style: none; margin: 0; padding: 0; }
hr { margin: 0; border: 0; width: 2px; height: 24px; background: #777; flex: none; }
.defs { position: absolute; width: 0; height: 0; }
.and { width: 16px; height: 14px; }
.arr { width: 11px; height: 8px; }
.dev { width: 18px; height: 20px; }
.x { width: 11px; height: 11px; }
.green { color: #1fdc3c; }

.app {
  flex: 1;
  min-height: 0;
  margin: 1px 10px 0;
  border: 1px solid #8f9490;
  border-top-color: #333;
  border-radius: 8px;
  background: #000;
  display: flex;
  flex-direction: column;
  overflow: hidden;
}

/* title bar */
.titlebar { flex: none; height: 36px; border-bottom: 2px solid #8a8a8a; display: flex; align-items: center; padding-left: 14px; }
.logo { width: 20px; height: 16px; margin-right: 21px; }
.menu { display: flex; gap: 16px; }
.menu u { text-underline-offset: 2px; }
h1 { margin: 0 0 0 42px; font-size: 14px; font-weight: 400; color: #c98a3a; white-space: nowrap; }
.winbtns { margin-left: auto; display: flex; gap: 45px; padding-right: 22px; color: #ccc; }
.winbtns svg { width: 14px; height: 14px; }

/* navigation bar */
.navbar { flex: none; height: 37px; border-bottom: 3px solid #858585; display: flex; align-items: center; justify-content: space-between; padding: 0 7px 0 14px; }
.crumbs { display: flex; align-items: center; white-space: nowrap; }
.sep { width: 8px; height: 20px; margin: 0 6px 0 5px; }
.crumbs a { color: #27bdd0; margin-left: 4px; }
.xml { width: 19px; height: 20px; }
.tools { display: flex; align-items: center; }
.tools .ic { width: 32px; height: 24px; justify-content: center; }
.ic svg { width: 19px; height: 19px; }
.combo { height: 29px; border: 2px solid #bbb; border-radius: 4px; padding: 0 10px 0 11px; margin-left: 8px; gap: 7px; white-space: nowrap; }
.combo .arr { margin-left: 6px; }
.combo .dev { margin-right: -4px; }
.run { display: flex; padding: 0 4px 0 6px; }
.cyan { color: #27c9ea; }
.git { padding: 0 6px 0 11px; }
.vcs { display: flex; gap: 1px; padding-right: 3px; }
.tools > hr + .ic { margin-left: 6px; }
.avatar { width: 21px; height: 21px; margin-left: 7px; }

/* main area */
main { flex: 1; min-height: 0; display: flex; }
.stripe { flex: none; display: flex; flex-direction: column; gap: 1px; font-size: 13px; line-height: 26px; font-family: "Open Sans", "Noto Sans", sans-serif; }
.stripe button { writing-mode: vertical-rl; gap: 6px; width: 26px; white-space: nowrap; }
.stripe svg { width: 15px; height: 15px; }
.stripe .push { margin-top: auto; }
.stripe .on { background: #2f2fff; }
.left { border-right: 2px solid #858585; }
.left button { transform: rotate(180deg); padding: 12px 0 11px; }
.left svg { transform: rotate(180deg); }
.rgt { border-left: 1px solid #aaa; gap: 4px; }
.rgt button { gap: 5px; padding: 10px 0 12px; }
.center { flex: 1; min-width: 0; display: flex; flex-direction: column; }
.panes { flex: 1; min-height: 0; display: flex; }

.project { flex: none; width: 329px; position: relative; overflow: hidden; }
.project header { height: 33px; background: #281733; display: flex; align-items: center; padding: 0 8px 0 16px; }
.project header span { padding: 0 20px 0 7px; }
.acts { margin-left: auto; display: flex; align-items: center; gap: 16px; }
.acts svg { width: 17px; height: 17px; }
.acts hr { margin: 0 -6px; }
.tree li { height: 25px; display: flex; align-items: center; padding-left: 97px; gap: 4px; white-space: nowrap; }
.tree li > svg { width: 19px; height: 20px; }
.tree .c { color: #43cfe2; }
.tree .g { color: #4fb33e; }
.tree .sel { background: #3e3c4e; }
.tree .dir { padding-left: 51px; }
.tree .sub { padding-left: 74px; }
.tree li .chev { width: 12px; height: 12px; margin-right: 8px; color: #bbb; }
.tree li .fold { width: 18px; height: 15px; margin-right: 1px; }
.tree em { font-style: normal; color: #777; }
.vbar { position: absolute; right: 2px; bottom: 98px; width: 11px; height: 122px; background: #aaa; }
.hbar { position: absolute; left: 0; bottom: 0; width: 261px; height: 10px; background: #aaa; }

/* narrow layout editor */
.editor { flex: none; width: 87px; border: solid #a0a0a0; border-width: 0 2px 0 1px; display: flex; flex-direction: column; }
.etabs { flex: none; height: 33px; border-bottom: 2px solid #777; display: flex; align-items: center; justify-content: space-between; padding: 0 12px 0 0; position: relative; }
.cur { position: absolute; left: 0; bottom: -2px; width: 15px; height: 5px; background: #27e0f0; }
.etabs .chev { width: 13px; height: 13px; margin-left: 28px; }
.etabs .dts { width: 6px; height: 18px; }
.emore { flex: none; height: 33px; border-bottom: 1px solid #aaa; text-align: right; padding: 4px 7px 0; color: #ccc; }
.ecols { flex: 1; min-height: 0; display: flex; border-bottom: 1px solid #aaa; }
.palette { flex: none; width: 36px; overflow: hidden; display: flex; flex-direction: column; }
.phead { flex: none; height: 36px; border: solid #aaa; border-width: 0 1px 1px 0; display: flex; align-items: center; padding-left: 12px; }
.phead svg { width: 15px; height: 15px; }
.palette li { height: 30px; line-height: 33px; padding-left: 14px; font-size: 12px; overflow: hidden; }
.palette .sel { background: #3e3c4e; color: #aaa; }
.gap { height: 64px; border: solid #aaa; border-width: 0 1px 1px 0; margin-bottom: 9px; }
.comp { border-top: 2px solid #777; }
.ctree { flex: 1; margin-left: 1px; border: solid #aaa; border-width: 0 1px 0 2px; }
.surface { flex: none; width: 40px; display: flex; flex-direction: column; }
.warn { height: 36px; border-bottom: 1px solid #aaa; display: grid; place-items: center; padding-left: 4px; }
.warn svg { width: 17px; height: 16px; }
.help { height: 123px; padding: 10px 0 0 14px; }
.help span { display: block; width: 16px; height: 16px; border-radius: 8px; background: #16d6ec; color: #003; font-size: 13px; line-height: 16px; text-align: center; font-weight: 600; }
.canvas { flex: 1; border-top: 3px solid #888; position: relative; display: flex; flex-direction: column; justify-content: flex-end; gap: 6px; padding-bottom: 26px; }
.sbar { position: absolute; right: 0; top: 0; width: 12px; height: 432px; background: #b0b0b0; }
.zoomcut { width: 20px; height: 135px; border: 1px solid #333; border-left: 0; border-radius: 0 6px 6px 0; display: flex; flex-direction: column; justify-content: space-around; overflow: hidden; }
.zoomcut.hand { height: 38px; }
.zoomcut span { font-size: 20px; text-indent: -3px; }
.zoomcut span.one { font-size: 13px; font-weight: 700; text-indent: 0; }
.zoomcut svg { width: 12px; height: 18px; }
.attrs { flex: 1; border-left: 2px solid #777; }
.attrs div { height: 36px; border-bottom: 1px solid #aaa; padding-top: 12px; }
.attrs svg { width: 6px; height: 12px; }
.attrs div + div { height: 30px; }
.efoot { height: 26px; background: #0d0d0d; flex: none; }

/* emulator */
.emulator { flex: 1; min-width: 0; display: flex; flex-direction: column; }
.emulator header { flex: none; height: 33px; background: #46006e; display: flex; align-items: stretch; padding: 0 7px 0 7px; }
.lbl { line-height: 31px; }
.tab { display: flex; align-items: center; border-bottom: 5px solid #27e0f0; padding: 3px 14px 0 16px; margin-left: 8px; white-space: nowrap; border-radius: 3px; }
.tab .dev { margin-right: 4px; }
.tab .x { margin-left: 9px; }
.etools { flex: none; height: 36px; border-bottom: 2px solid #aaa; display: flex; align-items: center; }
.etools button { width: 32px; justify-content: center; height: 32px; }
.etools button.n { width: 28px; }
.etools svg { width: 18px; height: 18px; }
.stage { flex: 1; min-height: 0; position: relative; display: flex; justify-content: center; }
.phone { position: relative; width: 359px; margin: 1px 4px 0 0; border: 2px solid #6a6a6a; border-radius: 52px; background: #050505; padding: 0 11px; display: flex; flex-direction: column; box-shadow: inset 0 0 0 3px #141414, inset 0 0 0 4px #444; }
.bezel { flex: none; height: 42px; position: relative; }
.cam { position: absolute; left: 80px; top: 21px; width: 10px; height: 10px; border-radius: 5px; background: #1d1d1d; }
.ear { position: absolute; left: 148px; top: 23px; width: 37px; height: 4px; border-radius: 2px; background: #333; }
.screen { flex: 1; min-height: 0; display: flex; flex-direction: column; font-family: Roboto, sans-serif; margin-right: -1px; }
.sbr { flex: none; height: 40px; background: #3700b3; border-radius: 34px 34px 0 0; display: flex; align-items: center; gap: 7px; padding: 0 6px 0 6px; font-size: 12px; }
.sbr svg { width: 12px; height: 12px; }
.sbr .wifi { width: 13px; margin-left: auto; }
.sbr .wifi ~ svg { margin-left: -5px; }
.health { flex: 1; min-height: 0; background: #1cb5ac; position: relative; display: flex; flex-direction: column; align-items: flex-start; padding: 37px 29px 0; }
h2, h3 { margin: 0; font-weight: 700; color: #eefdfd; }
h2 { font-size: 32px; line-height: 38px; padding-left: 4px; }
h3 { font-size: 28px; line-height: 33px; text-align: center; padding: 35px 0 0; width: 270px; }
.health input { background: none; border: 0; border-bottom: 1px solid #0c6f6a; border-radius: 0; width: 244px; height: 34px; padding: 6px 0 0 5px; margin-left: 31px; font: 700 19px/28px Roboto, sans-serif; color: #fff; outline: none; }
.health input::placeholder { color: #eefdfd; opacity: 1; }
.f1 { margin-top: 43px; }
.f2 { margin-top: 31px; }
.f3 { margin-top: 38px; }
.health .f3 { border-bottom-color: #1a9f98; padding-left: 3px; }
.confirm, .exit { background: #f3f3f3; color: #7d0010; border-radius: 4px; justify-content: center; font: 700 19px/24px Roboto, sans-serif; letter-spacing: 2px; box-shadow: 0 1px 2px #0006; white-space: nowrap; }
.confirm { width: 275px; height: 69px; margin-top: 52px; }
.exit { width: 133px; height: 33px; margin: 33px 0 0 64px; }
.cursor { position: absolute; left: 135px; top: 244px; width: 13px; height: 20px; }
.softnav { flex: none; height: 57px; display: flex; justify-content: space-between; padding: 13px 65px 0 63px; }
.softnav svg { width: 13px; height: 14px; }
.power, .volume { position: absolute; right: -5px; width: 3px; }
.power { top: 184px; height: 50px; background: #b8624f; }
.volume { top: 284px; height: 94px; background: #222; }
.zoom { position: absolute; right: 21px; bottom: 25px; width: 34px; height: 134px; border: 1px solid #333; border-radius: 4px; display: flex; flex-direction: column; justify-content: space-around; align-items: center; font-size: 14px; font-weight: 700; }
.zoom svg { width: 13px; height: 13px; }
.zoom .fit svg { width: 18px; height: 16px; color: #777; }

.runbar { flex: none; height: 36px; border: solid #8a8a8a; border-width: 3px 0 2px; background: #281733; display: flex; align-items: stretch; padding: 0 7px 0 6px; line-height: 35px; }
.runbar .tab { padding: 5px 13px 0 17px; margin-left: 8px; border-radius: 0; }
.runbar .tab .and { margin-right: 7px; }

/* bottom bars */
.toolwins { flex: none; height: 31px; border-top: 1px solid #999; display: flex; font-size: 12px; white-space: nowrap; }
.toolwins button { gap: 7px; padding: 4px 12px 0 13px; }
.toolwins button:first-child { margin-left: 22px; }
.toolwins svg { width: 15px; height: 16px; }
.toolwins .on { background: #2f2fff; }
.toolwins .end { margin-left: auto; padding-right: 41px; }
.status { flex: none; height: 25px; border-top: 1px solid #999; display: flex; align-items: center; padding: 0 14px 0 6px; gap: 16px; }
.status svg { width: 15px; height: 15px; }
.status .msg { margin: 0 auto 0 -4px; }
.br { display: flex; align-items: center; gap: 7px; }
.status .br svg { width: 12px; height: 18px; }
.behind { flex: none; height: 10px; margin-left: 76px; background: #0b0812; border: 1px solid #444; }

/* taskbar */
.taskbar { flex: none; height: 60px; background: linear-gradient(90deg, #dde8f3, #d6def4 50%, #d5dbf0 58%, #deeaf3); color: #222; display: flex; align-items: center; padding: 0 24px 0 26px; }
.start svg { width: 28px; height: 28px; }
.search { margin-left: 20px; width: 271px; height: 38px; border-radius: 19px; background: #f6f9fc; display: flex; align-items: center; padding: 0 2px 0 13px; }
.search svg { width: 18px; height: 18px; }
.search .art { width: 66px; height: 36px; }
.search input { flex: 1; min-width: 0; border: 0; background: none; font: 16px/20px "Open Sans", sans-serif; padding: 0 0 0 13px; }
.search input::placeholder { color: #666; opacity: 1; }
.apps { display: flex; align-self: stretch; align-items: center; margin-left: 2px; }
.apps button { position: relative; width: 55px; height: 48px; justify-content: center; }
.apps button.wide { width: 60px; margin-right: -3px; }
.apps svg { width: 29px; height: 29px; }
.dot::after { content: ""; position: absolute; bottom: 0; left: 24px; width: 7px; height: 4px; border-radius: 2px; background: #778; }
.apps .act { background: linear-gradient(#e9eef8, #e9eef8) center / 48px 48px no-repeat; }
.act.dot::after { left: 18px; width: 20px; background: #1a6fc0; }
.temp, .count { position: absolute; border-radius: 11px; font-size: 13px; line-height: 20px; }
.temp { right: 6px; top: 2px; background: #f6f6f6; padding: 0 3px; font-size: 12px; }
.count { right: 4px; top: 2px; background: #1565b0; color: #fff; width: 24px; line-height: 22px; text-align: center; }
.tray { margin-left: auto; display: flex; align-items: center; gap: 22px; }
.tray svg { width: 18px; height: 20px; }
.tray div { display: flex; gap: 12px; }
time { display: flex; flex-direction: column; text-align: right; line-height: 20px; font-size: 14px; margin-left: 2px; }
.badge { width: 23px; height: 23px; border-radius: 12px; background: #1565b0; color: #fff; font-size: 12px; line-height: 22px; text-align: center; margin-left: -10px; }
```
